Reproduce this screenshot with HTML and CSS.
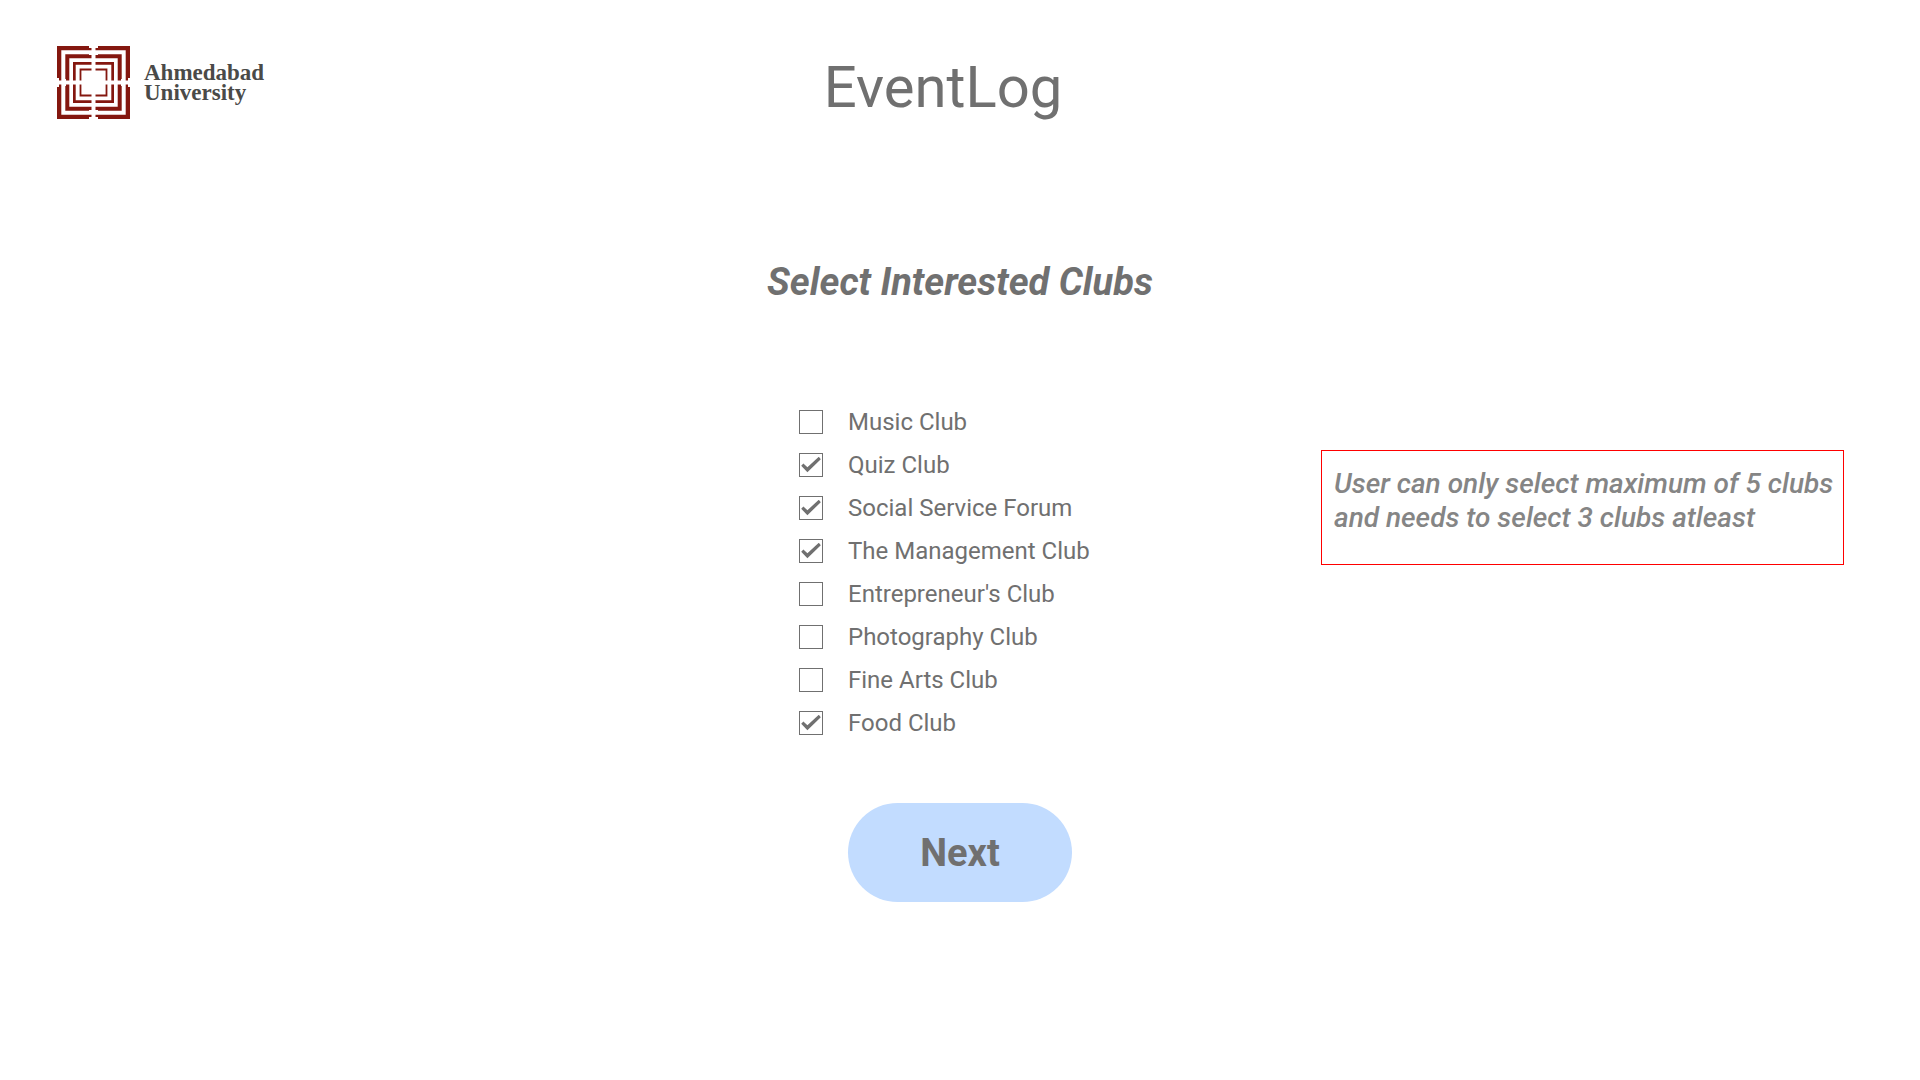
FILE: index.html
```
<!DOCTYPE html>
<html lang="en">
<head>
<meta charset="utf-8">
<meta name="viewport" content="width=device-width, initial-scale=1">
<title>EventLog</title>
<link rel="stylesheet" href="styles.css">
</head>
<body>
<header class="header">
  <div class="brand">
    <svg class="brand-mark" viewBox="0 0 73 73" aria-hidden="true">
      <defs>
        <path id="quarter" d="M0 0H32V2H34.5V4.3H4.3V34.5H2V32H0ZM8.3 8.3H32V9H34.5V12.3H12.3V34.5H9V33H8.3ZM16 16H34.5V18.7H18.7V34.5H16ZM22.6 22.6H34.5V24.4H24.4V34.5H22.6Z"/>
      </defs>
      <use href="#quarter"/>
      <use href="#quarter" transform="translate(73 0) scale(-1 1)"/>
      <use href="#quarter" transform="translate(0 73) scale(1 -1)"/>
      <use href="#quarter" transform="translate(73 73) scale(-1 -1)"/>
    </svg>
    <span class="brand-name">Ahmedabad<br>University</span>
  </div>
  <h1 class="title">EventLog</h1>
</header>
<main>
  <h2 class="subtitle">Select Interested Clubs</h2>
  <form class="form">
    <div class="choices">
      <label class="choice"><input type="checkbox" name="club" value="music">Music Club</label>
      <label class="choice"><input type="checkbox" name="club" value="quiz" checked>Quiz Club</label>
      <label class="choice"><input type="checkbox" name="club" value="social" checked>Social Service Forum</label>
      <label class="choice"><input type="checkbox" name="club" value="management" checked>The Management Club</label>
      <label class="choice"><input type="checkbox" name="club" value="entrepreneur">Entrepreneur's Club</label>
      <label class="choice"><input type="checkbox" name="club" value="photography">Photography Club</label>
      <label class="choice"><input type="checkbox" name="club" value="arts">Fine Arts Club</label>
      <label class="choice"><input type="checkbox" name="club" value="food" checked>Food Club</label>
    </div>
    <p class="note">User can only select maximum of 5 clubs<br>and needs to select 3 clubs atleast</p>
    <button class="next" type="submit">Next</button>
  </form>
</main>
</body>
</html>
```
FILE: styles.css
```
* {
  box-sizing: border-box;
}

body {
  margin: 0;
  background: #fff;
  color: #707070;
  font-family: Roboto, "Liberation Sans", sans-serif;
}

.header {
  display: grid;
  grid-template-columns: 1fr auto 1fr;
  align-items: start;
  padding: 46px 91px 0 57px;
}

.brand {
  display: flex;
  align-items: center;
  gap: 14px;
}

.brand-mark {
  width: 73px;
  height: 73px;
  fill: #84170f;
}

.brand-name {
  color: #4a4a48;
  font: bold 23px/20px "Liberation Serif", serif;
}

.title {
  margin: 0;
  font-size: 58px;
  font-weight: 400;
  line-height: 82px;
}

.subtitle {
  margin: 130px 0 0;
  font-size: 38px;
  font-style: italic;
  font-weight: 700;
  line-height: 48px;
  text-align: center;
}

.form {
  display: grid;
  grid-template-columns: 1fr 322px 1fr;
  row-gap: 59px;
  padding-top: 94px;
}

.choices {
  grid-column: 2;
}

.choice {
  display: flex;
  align-items: center;
  gap: 25px;
  height: 43px;
  font-size: 24px;
  white-space: nowrap;
}

.choice input {
  appearance: none;
  display: grid;
  place-items: center;
  width: 24px;
  height: 24px;
  margin: 0;
  border: 1px solid #707070;
}

.choice input:checked::before {
  content: "";
  width: 20px;
  height: 16px;
  background: #707070;
  clip-path: polygon(1% 58%, 12% 43%, 32% 67%, 89% 2%, 99% 17%, 32% 98%);
}

.note {
  grid-column: 3;
  justify-self: end;
  align-self: start;
  width: 523px;
  margin: 50px 76px 0 24px;
  padding: 16px 0 29px 12px;
  border: 1px solid #f00;
  color: #858585;
  font-size: 28px;
  font-style: italic;
  font-weight: 500;
  line-height: 34px;
}

.next {
  grid-column: 2;
  justify-self: center;
  width: 224px;
  height: 99px;
  border: 0;
  border-radius: 50px;
  background: #c2dcff;
  color: #707070;
  font: 700 38px Roboto, "Liberation Sans", sans-serif;
}
```
